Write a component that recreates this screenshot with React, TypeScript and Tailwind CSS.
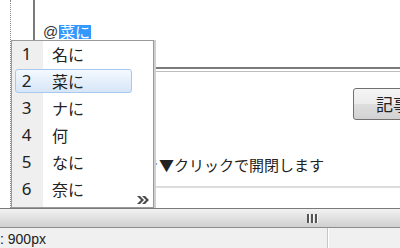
import React from "react";

const items = [
  { n: "1", t: "名に" },
  { n: "2", t: "菜に", sel: true },
  { n: "3", t: "ナに" },
  { n: "4", t: "何" },
  { n: "5", t: "なに" },
  { n: "6", t: "奈に" },
];

export default function App() {
  return (
    <div className="w-[400px] h-[248px] overflow-hidden bg-white relative flex flex-col font-['Noto_Sans_CJK_JP',sans-serif] text-[#222]">
      <div className="h-[208px] flex shrink-0">
        <div className="w-[10px] shrink-0" />
        <div className="w-px shrink-0 border-l border-dotted border-[#8a8a8a]" />
        <div className="flex-1 flex flex-col pl-[22px] min-w-0">
          <div className="h-[69px] shrink-0 border-l-2 border-b-2 border-[#7a7a7a] pl-[8px] pt-[25px] flex items-start">
            <span className="inline-block w-[16px] h-[14px] leading-[14px] text-[15px] font-['Liberation_Sans',sans-serif] text-[#333]">@</span>
            <span className="inline-block h-[14px] leading-[14px] text-[15px] bg-[#3399ff] text-white px-px">菜に</span>
          </div>
          <div className="mt-[2px] h-px shrink-0 bg-[#bdbdbd]" />
          <div className="mt-[16px] flex shrink-0">
            <div className="ml-[320px] w-[100px] h-[32px] shrink-0 rounded-[3px] border border-[#707070] bg-[linear-gradient(to_bottom,#f4f4f4_0%,#ececec_50%,#dedede_50%,#d2d2d2_100%)] pl-[22px] flex items-center text-[17px] whitespace-nowrap overflow-hidden">
              記事を投稿
            </div>
          </div>
          <div className="mt-[34px] h-[22px] leading-[22px] text-[15px] whitespace-nowrap ml-[66px] shrink-0">
            移動でき▼クリックで開閉します
          </div>
          <div className="mt-[10px] h-[2px] shrink-0 bg-[#dcdcdc]" />
        </div>
      </div>

      <div className="h-[20px] shrink-0 border-t border-[#7a7a7a] border-b border-b-[#8c8c8c] bg-[linear-gradient(to_bottom,#f2f2f2,#d0d0d0)] flex items-center pl-[307px]">
        <div className="flex gap-[2px]">
          <span className="w-[2px] h-[9px] bg-[#555] shadow-[1px_0_0_#fafafa]" />
          <span className="w-[2px] h-[9px] bg-[#555] shadow-[1px_0_0_#fafafa]" />
          <span className="w-[2px] h-[9px] bg-[#555] shadow-[1px_0_0_#fafafa]" />
        </div>
      </div>

      <div className="h-[20px] shrink-0 bg-[#f0f0f0] flex">
        <div className="w-[328px] border-r border-[#c6c6c6] shadow-[1px_0_0_#ffffff] pt-[3px] leading-[17px] text-[14px] font-['Liberation_Sans',sans-serif] text-[#222] whitespace-nowrap">
          : 900px
        </div>
      </div>

      <div className="absolute left-[11px] top-[40px] w-[143px] h-[168px] border border-[#9a9a9a] shadow-[2px_0_0_#cfcfcf] bg-[linear-gradient(to_right,#efefef_0px,#efefef_31px,#ffffff_31px)] pt-[1px] px-[3px] flex flex-col gap-[3px]">
        {items.map((it) => (
          <div
            key={it.n}
            className={
              "w-[117px] h-[24px] flex items-center rounded-[3px] border " +
              (it.sel
                ? "border-[#a9c8ee] bg-[linear-gradient(to_bottom,#f4f9fe,#d6e6f8)]"
                : "border-transparent")
            }
          >
            <span className="w-[21px] text-center text-[17px] leading-[22px] font-['Noto_Sans',sans-serif] text-[#222]">{it.n}</span>
            <span className="ml-[15px] text-[16px] leading-[22px] text-[#222]">{it.t}</span>
          </div>
        ))}
        <svg className="absolute right-[4px] bottom-[3px]" width="12" height="8" viewBox="0 0 12 8">
          <path d="M0 0 L3 0 L7 4 L3 8 L0 8 L4 4 Z" fill="#4a4a4a" />
          <path d="M5 0 L8 0 L12 4 L8 8 L5 8 L9 4 Z" fill="#4a4a4a" />
        </svg>
      </div>
    </div>
  );
}
